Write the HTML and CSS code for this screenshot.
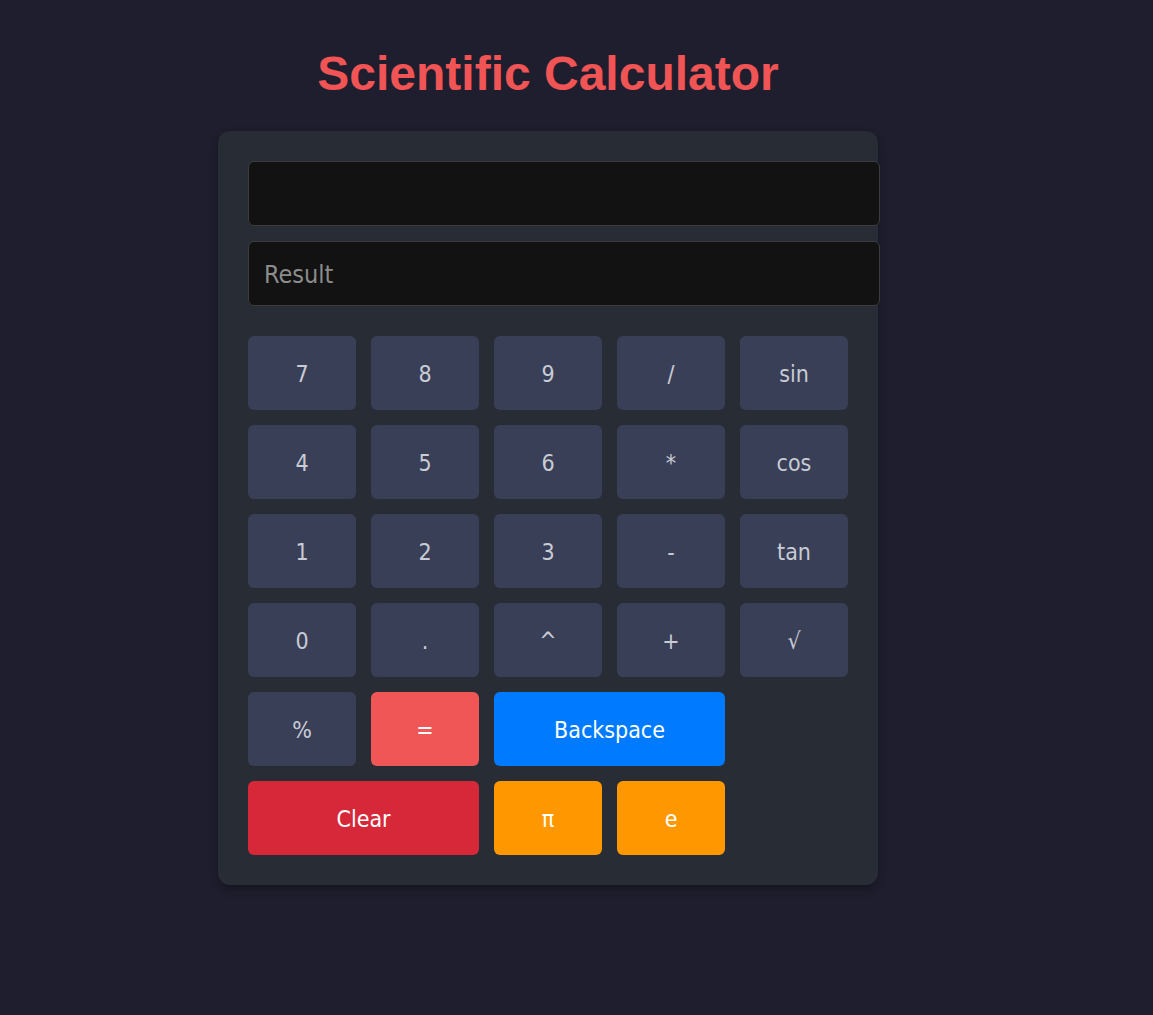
FILE: index.html
```html
<!DOCTYPE html>
<html lang="en">
<head>
<meta charset="utf-8">
<title>Scientific Calculator</title>
<link rel="stylesheet" href="styles.css">
</head>
<body>
<div class="page">
  <h1 class="title">Scientific Calculator</h1>
  <div class="calculator">
    <input class="display" type="text">
    <input class="display" type="text" placeholder="Result" readonly>
    <div class="keys">
      <button class="key">7</button>
      <button class="key">8</button>
      <button class="key">9</button>
      <button class="key">/</button>
      <button class="key">sin</button>
      <button class="key">4</button>
      <button class="key">5</button>
      <button class="key">6</button>
      <button class="key">*</button>
      <button class="key">cos</button>
      <button class="key">1</button>
      <button class="key">2</button>
      <button class="key">3</button>
      <button class="key">-</button>
      <button class="key">tan</button>
      <button class="key">0</button>
      <button class="key">.</button>
      <button class="key">^</button>
      <button class="key">+</button>
      <button class="key">√</button>
      <button class="key">%</button>
      <button class="key key-equals">=</button>
      <button class="key key-back span2">Backspace</button>
      <button class="key key-clear span2 row-start">Clear</button>
      <button class="key key-const">π</button>
      <button class="key key-const">e</button>
    </div>
  </div>
</div>
</body>
</html>
```

FILE: styles.css
```css
html, body {
  margin: 0;
  background: #1e1e2e;
}
body {
  min-height: 1015px;
  font-family: "DejaVu Sans Condensed", "DejaVu Sans", sans-serif;
}
.page {
  display: flex;
  flex-direction: column;
  align-items: center;
  padding: 46px 57px 0 0;
}
.title {
  margin: 0 0 30px;
  font-family: "Liberation Sans", Arial, sans-serif;
  font-weight: bold;
  font-size: 48px;
  line-height: 55px;
  color: #f05454;
}
.calculator {
  width: 600px;
  padding: 30px;
  background: #282c34;
  border-radius: 12px;
  box-shadow: 0 4px 10px rgba(0, 0, 0, 0.3);
}
.display {
  display: block;
  box-sizing: content-box;
  width: 600px;
  height: 63px;
  padding: 2px 15px 0;
  height: 61px;
  margin: 0 0 15px;
  background: #121212;
  border: 1px solid #3c3c3c;
  border-radius: 6px;
  color: #ddd;
  font-family: inherit;
  font-size: 25px;
  outline: none;
}
.display::placeholder {
  color: #8c8c8c;
}
.keys {
  display: grid;
  grid-template-columns: repeat(5, 108px);
  grid-auto-rows: 74px;
  gap: 15px;
  margin-top: 30px;
}
.key {
  border: none;
  border-radius: 6px;
  background: #3a3f58;
  color: #c8ccd4;
  font-family: inherit;
  font-size: 23px;
  padding: 2px 0 0;
  cursor: pointer;
}
.span2 {
  grid-column: span 2;
}
.row-start {
  grid-column: 1 / span 2;
}
.key-equals {
  background: #f05656;
  color: #fff;
}
.key-back {
  background: #007bff;
  color: #fff;
}
.key-clear {
  background: #d62839;
  color: #fff;
}
.key-const {
  background: #ff9800;
  color: #fff;
}
```
